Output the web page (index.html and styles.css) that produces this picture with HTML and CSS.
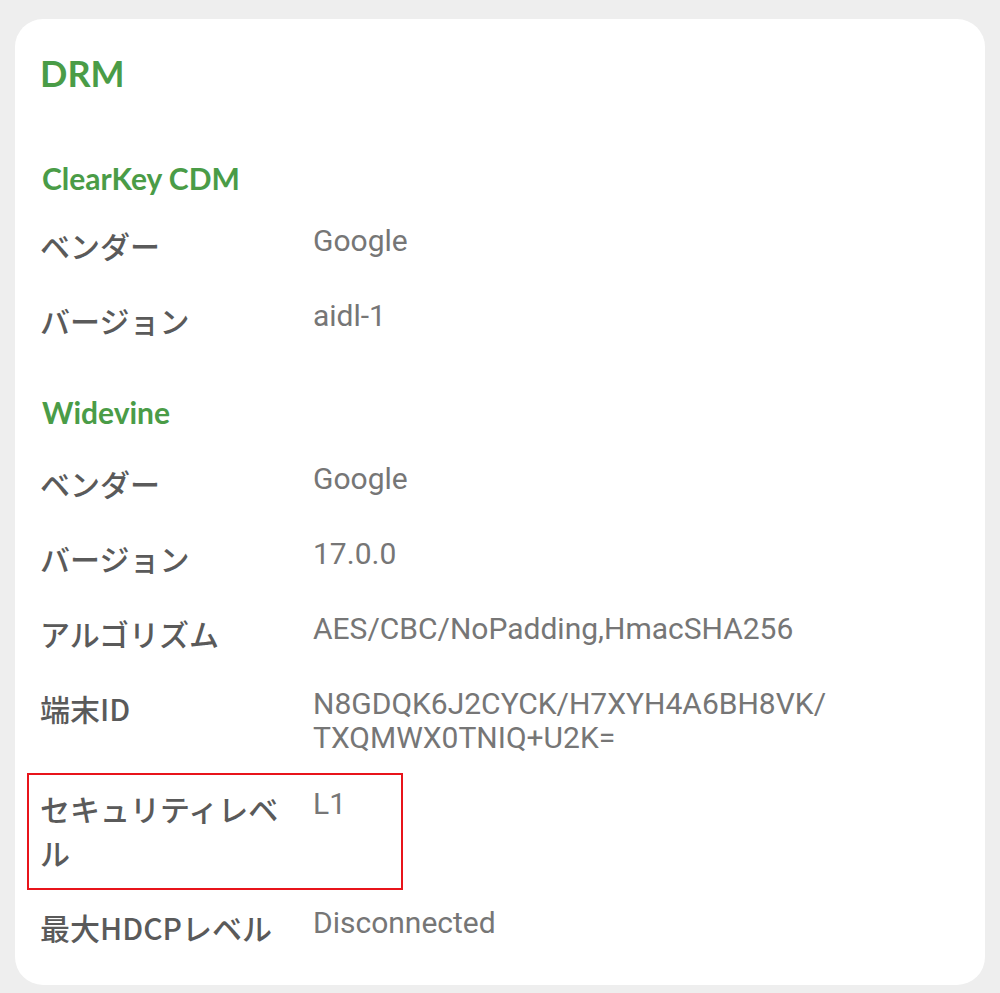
FILE: index.html
```html
<!DOCTYPE html>
<html lang="ja">
<head>
<meta charset="utf-8">
<title>DRM</title>
<link rel="stylesheet" href="styles.css">
</head>
<body>
<main class="card">
  <h1 class="title">DRM</h1>

  <section class="group">
    <h2 class="group-title">ClearKey CDM</h2>
    <div class="row"><div class="label">ベンダー</div><div class="value">Google</div></div>
    <div class="row"><div class="label">バージョン</div><div class="value">aidl-1</div></div>
  </section>

  <section class="group">
    <h2 class="group-title">Widevine</h2>
    <div class="row"><div class="label">ベンダー</div><div class="value">Google</div></div>
    <div class="row"><div class="label">バージョン</div><div class="value">17.0.0</div></div>
    <div class="row"><div class="label">アルゴリズム</div><div class="value">AES/CBC/NoPadding,HmacSHA256</div></div>
    <div class="row"><div class="label">端末ID</div><div class="value">N8GDQK6J2CYCK/H7XYH4A6BH8VK/<br>TXQMWX0TNIQ+U2K=</div></div>
    <div class="row row-marked"><div class="label">セキュリティレベル</div><div class="value">L1</div><span class="mark"></span></div>
    <div class="row"><div class="label">最大HDCPレベル</div><div class="value">Disconnected</div></div>
  </section>
</main>
</body>
</html>
```

FILE: styles.css
```css
html, body {
  margin: 0;
  padding: 0;
  background: #eeeeee;
}
body {
  padding: 19px 15px 8px 15px;
}
.card {
  background: #ffffff;
  border-radius: 28px;
  padding: 32px 25px 20px 25px;
  height: 966px;
  box-sizing: border-box;
}
.title {
  margin: 0;
  font-family: Lato, "Noto Sans", sans-serif;
  font-weight: 700;
  font-size: 36px;
  line-height: 44px;
  color: #4a9c47;
}
.group {
  margin-top: 65px;
}
.group + .group {
  margin-top: 36px;
}
.group-title {
  margin: 0 0 12px 2px;
  font-family: Lato, "Noto Sans", sans-serif;
  font-weight: 700;
  font-size: 30px;
  line-height: 36px;
  color: #4a9c47;
}
.group + .group .group-title {
  margin-bottom: 16px;
}
.row {
  position: relative;
  display: grid;
  grid-template-columns: 255px 1fr;
  column-gap: 18px;
  padding: 15px 0 16px 0;
}
.label {
  font-family: "Noto Sans CJK JP", "Noto Sans", sans-serif;
  font-weight: 500;
  font-size: 30px;
  line-height: 44px;
  color: #5a5a5a;
}
.value {
  padding-top: 1px;
  font-family: Roboto, "Noto Sans", sans-serif;
  font-weight: 400;
  font-size: 30px;
  line-height: 34px;
  color: #767676;
}
.mark {
  position: absolute;
  left: -13px;
  top: 2px;
  width: 376px;
  height: 117px;
  box-sizing: border-box;
  border: 2px solid #e8141b;
  pointer-events: none;
}
```
